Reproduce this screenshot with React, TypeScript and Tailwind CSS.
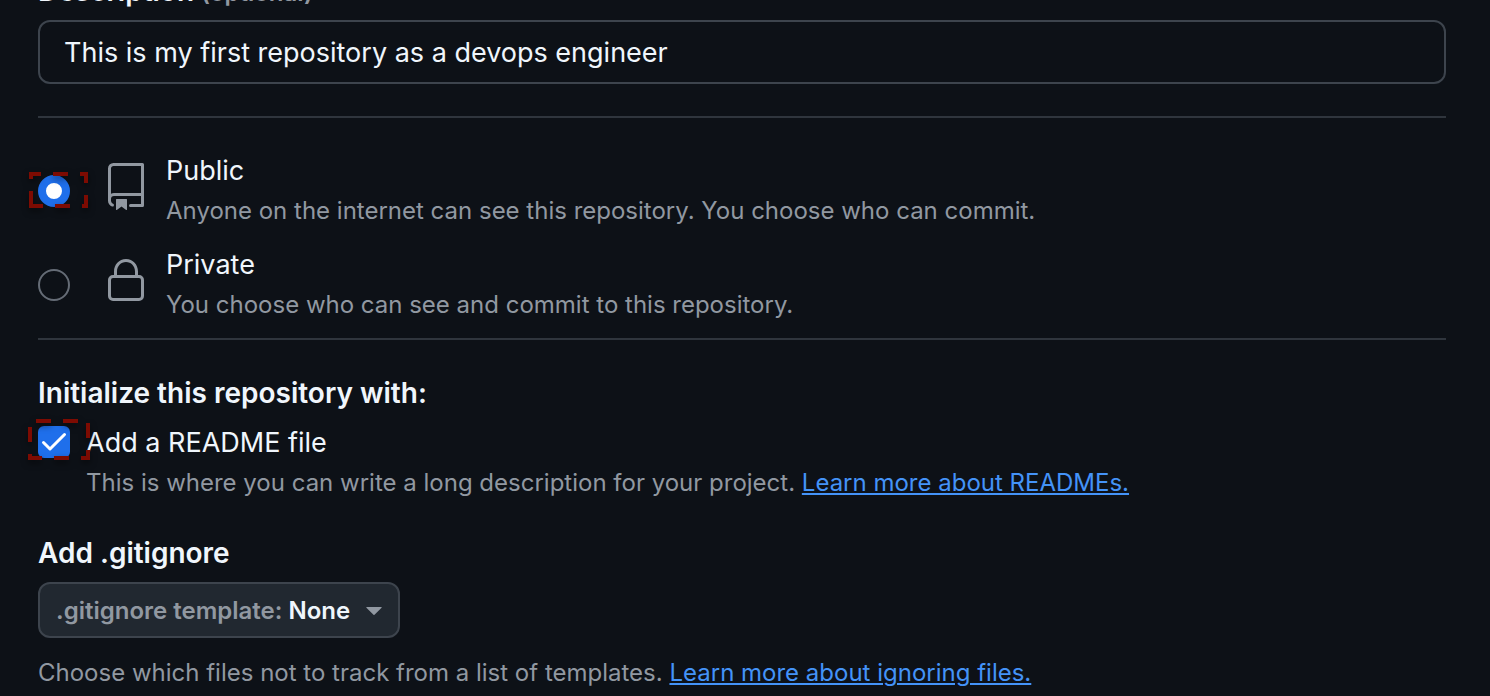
import { useState } from 'react';
import type { ReactNode } from 'react';

const titleText = 'text-[27px] leading-[42px] text-[#f0f6fc]';
const headingText = 'text-[28px] font-semibold leading-[42px] text-[#f0f6fc]';
const noteText = 'text-2xl leading-[38px] text-[#9198a1]';
const linkText = 'text-[#4493f8] underline underline-offset-2 decoration-2';

function RepoIcon() {
  return (
    <svg viewBox="0 0 24 24" className="size-12 fill-[#9198a1]" aria-hidden="true">
      <path d="M3 2.75A2.75 2.75 0 0 1 5.75 0h14.5a.75.75 0 0 1 .75.75v20.5a.75.75 0 0 1-.75.75h-6a.75.75 0 0 1 0-1.5h5.25v-4H6A1.5 1.5 0 0 0 4.5 18v.75c0 .716.43 1.334 1.05 1.605a.75.75 0 0 1-.6 1.374A3.251 3.251 0 0 1 3 18.75ZM19.5 1.5H5.75c-.69 0-1.25.56-1.25 1.25v12.651A2.989 2.989 0 0 1 6 15h13.5Z" />
      <path d="M7 18.25a.25.25 0 0 1 .25-.25h5a.25.25 0 0 1 .25.25v5.01a.25.25 0 0 1-.397.201l-2.206-1.604a.25.25 0 0 0-.294 0L7.397 23.46a.25.25 0 0 1-.397-.2v-5.01Z" />
    </svg>
  );
}

function LockIcon() {
  return (
    <svg viewBox="0 0 24 24" className="size-12 fill-[#9198a1]" aria-hidden="true">
      <path d="M6 9V7.25C6 3.845 8.503 1 12 1s6 2.845 6 6.25V9h.5a2.5 2.5 0 0 1 2.5 2.5v8a2.5 2.5 0 0 1-2.5 2.5h-13A2.5 2.5 0 0 1 3 19.5v-8A2.5 2.5 0 0 1 5.5 9Zm-1.5 2.5v8a1 1 0 0 0 1 1h13a1 1 0 0 0 1-1v-8a1 1 0 0 0-1-1h-13a1 1 0 0 0-1 1Zm3-4.25V9h9V7.25c0-2.67-1.922-4.75-4.5-4.75-2.578 0-4.5 2.08-4.5 4.75Z" />
    </svg>
  );
}

/* Dashed marker frames drawn over the chosen controls. */
function RadioMarker() {
  return (
    <svg
      viewBox="0 0 60 36"
      className="pointer-events-none absolute -left-[9px] -top-[3px] h-9 w-[60px] max-w-none overflow-visible fill-[#7d0b02] drop-shadow-[0_3px_3px_rgba(0,0,0,0.5)]"
      aria-hidden="true"
    >
      <path d="M0 0h12v4H4v3H0zM24 0h15v4H24zM51 0h8v11h-4V4h-4zM0 19h4v13h10v4H0zM26 32h15v4H26zM55 23h4v13h-6v-4h2z" />
    </svg>
  );
}

function CheckMarker() {
  return (
    <svg
      viewBox="0 0 62 41"
      className="pointer-events-none absolute -left-[10px] -top-[7px] h-[41px] w-[62px] max-w-none overflow-visible fill-[#7d0b02] drop-shadow-[0_3px_3px_rgba(0,0,0,0.5)]"
      aria-hidden="true"
    >
      <path d="M8 0h15v4H8zM35 0h15v4H35zM0 8h4v15H0zM58 4h4v15h-4zM0 35h4v2h10v4H0zM26 37h15v4H26zM58 31h4v10h-9v-4h5z" />
    </svg>
  );
}

type OptionProps = {
  id: string;
  title: string;
  note: string;
  icon: ReactNode;
  marked?: boolean;
  checked: boolean;
  onSelect: () => void;
};

function VisibilityOption({ id, title, note, icon, marked, checked, onSelect }: OptionProps) {
  return (
    <div className="flex items-start">
      <span className="relative mt-[25px] size-8 shrink-0">
        <input
          id={id}
          type="radio"
          name="visibility"
          checked={checked}
          onChange={onSelect}
          aria-describedby={id + '-note'}
          className="block size-8 appearance-none rounded-full border-2 border-[#656c76] checked:border-8 checked:border-[#1f6feb] checked:bg-white"
        />
        {marked && <RadioMarker />}
      </span>
      <span className="ml-8 mt-[13px] shrink-0">{icon}</span>
      <div className="ml-4">
        <label htmlFor={id} className={'block ' + titleText}>
          {title}
        </label>
        <p id={id + '-note'} className={noteText}>
          {note}
        </p>
      </div>
    </div>
  );
}

export default function App() {
  const [description, setDescription] = useState('This is my first repository as a devops engineer');
  const [visibility, setVisibility] = useState('public');
  const [readme, setReadme] = useState(true);

  return (
    <main className="min-h-screen overflow-hidden bg-[#0d1117] pl-[38px] pr-11 font-['Inter','Liberation_Sans',sans-serif]">
      <div className="flex h-5 items-end overflow-hidden pb-2">
        <label htmlFor="description" className={headingText}>
          Description <span className="text-2xl text-[#9198a1]">(optional)</span>
        </label>
      </div>
      <input
        id="description"
        type="text"
        value={description}
        onChange={(e) => setDescription(e.target.value)}
        className="block h-16 w-full rounded-xl border-2 border-[#3d444d] bg-[#0d1117] px-6 text-[27px] text-[#f0f6fc] outline-none"
      />

      <hr className="mt-8 border-t-2 border-[#2f353d]" />

      <fieldset className="mt-8 flex flex-col gap-3.5">
        <VisibilityOption
          id="public"
          title="Public"
          note="Anyone on the internet can see this repository. You choose who can commit."
          icon={<RepoIcon />}
          marked
          checked={visibility === 'public'}
          onSelect={() => setVisibility('public')}
        />
        <VisibilityOption
          id="private"
          title="Private"
          note="You choose who can see and commit to this repository."
          icon={<LockIcon />}
          checked={visibility === 'private'}
          onSelect={() => setVisibility('private')}
        />
      </fieldset>

      <hr className="mt-3.5 border-t-2 border-[#2f353d]" />

      <section className="mt-8">
        <h2 className={headingText}>Initialize this repository with:</h2>
        <div className="mt-2 flex items-start">
          <span className="relative z-10 mt-1 size-8 shrink-0">
            <input
              id="readme"
              type="checkbox"
              checked={readme}
              onChange={(e) => setReadme(e.target.checked)}
              aria-describedby="readme-note"
              className="peer block size-8 appearance-none rounded-md border-2 border-[#656c76] checked:border-[#1f6feb] checked:bg-[#1f6feb]"
            />
            <svg
              viewBox="0 0 32 32"
              className="pointer-events-none absolute inset-0 hidden size-8 peer-checked:block"
              fill="none"
              stroke="white"
              strokeWidth="3"
              strokeLinecap="round"
              strokeLinejoin="round"
              aria-hidden="true"
            >
              <path d="M5.5 16.5 12 23 26.500 8.500" />
            </svg>
            <CheckMarker />
          </span>
          <div className="ml-4">
            <label htmlFor="readme" className={'block ' + titleText}>
              Add a README file
            </label>
            <p id="readme-note" className={noteText}>
              This is where you can write a long description for your project.{' '}
              <a href="#readmes" className={linkText}>
                Learn more about READMEs.
              </a>
            </p>
          </div>
        </div>
      </section>

      <section className="mt-[30px]">
        <h2 className={headingText}>Add .gitignore</h2>
        <div className="relative mt-2 flex h-14 w-fit items-center rounded-xl border-2 border-[#3d444d] bg-[#212830] pl-4 pt-0.5 text-2xl font-semibold">
          <label htmlFor="gitignore" className="text-[#9198a1]">
            .gitignore template:
          </label>
          <select
            id="gitignore"
            className="h-full appearance-none bg-transparent pl-1.5 pr-12 text-[#f0f6fc] outline-none"
          >
            <option>None</option>
          </select>
          <svg
            viewBox="0 0 16 8"
            className="pointer-events-none absolute right-4 h-2 w-4 fill-[#9198a1]"
            aria-hidden="true"
          >
            <path d="M.8 0h14.400q.8 0 .4.800L8.500 7.700q-.5.500-1 0L.4.800Q0 0 .8 0z" />
          </svg>
        </div>
        <p className={'mt-4 ' + noteText}>
          Choose which files not to track from a list of templates.{' '}
          <a href="#ignoring" className={linkText}>
            Learn more about ignoring files.
          </a>
        </p>
      </section>
    </main>
  );
}
